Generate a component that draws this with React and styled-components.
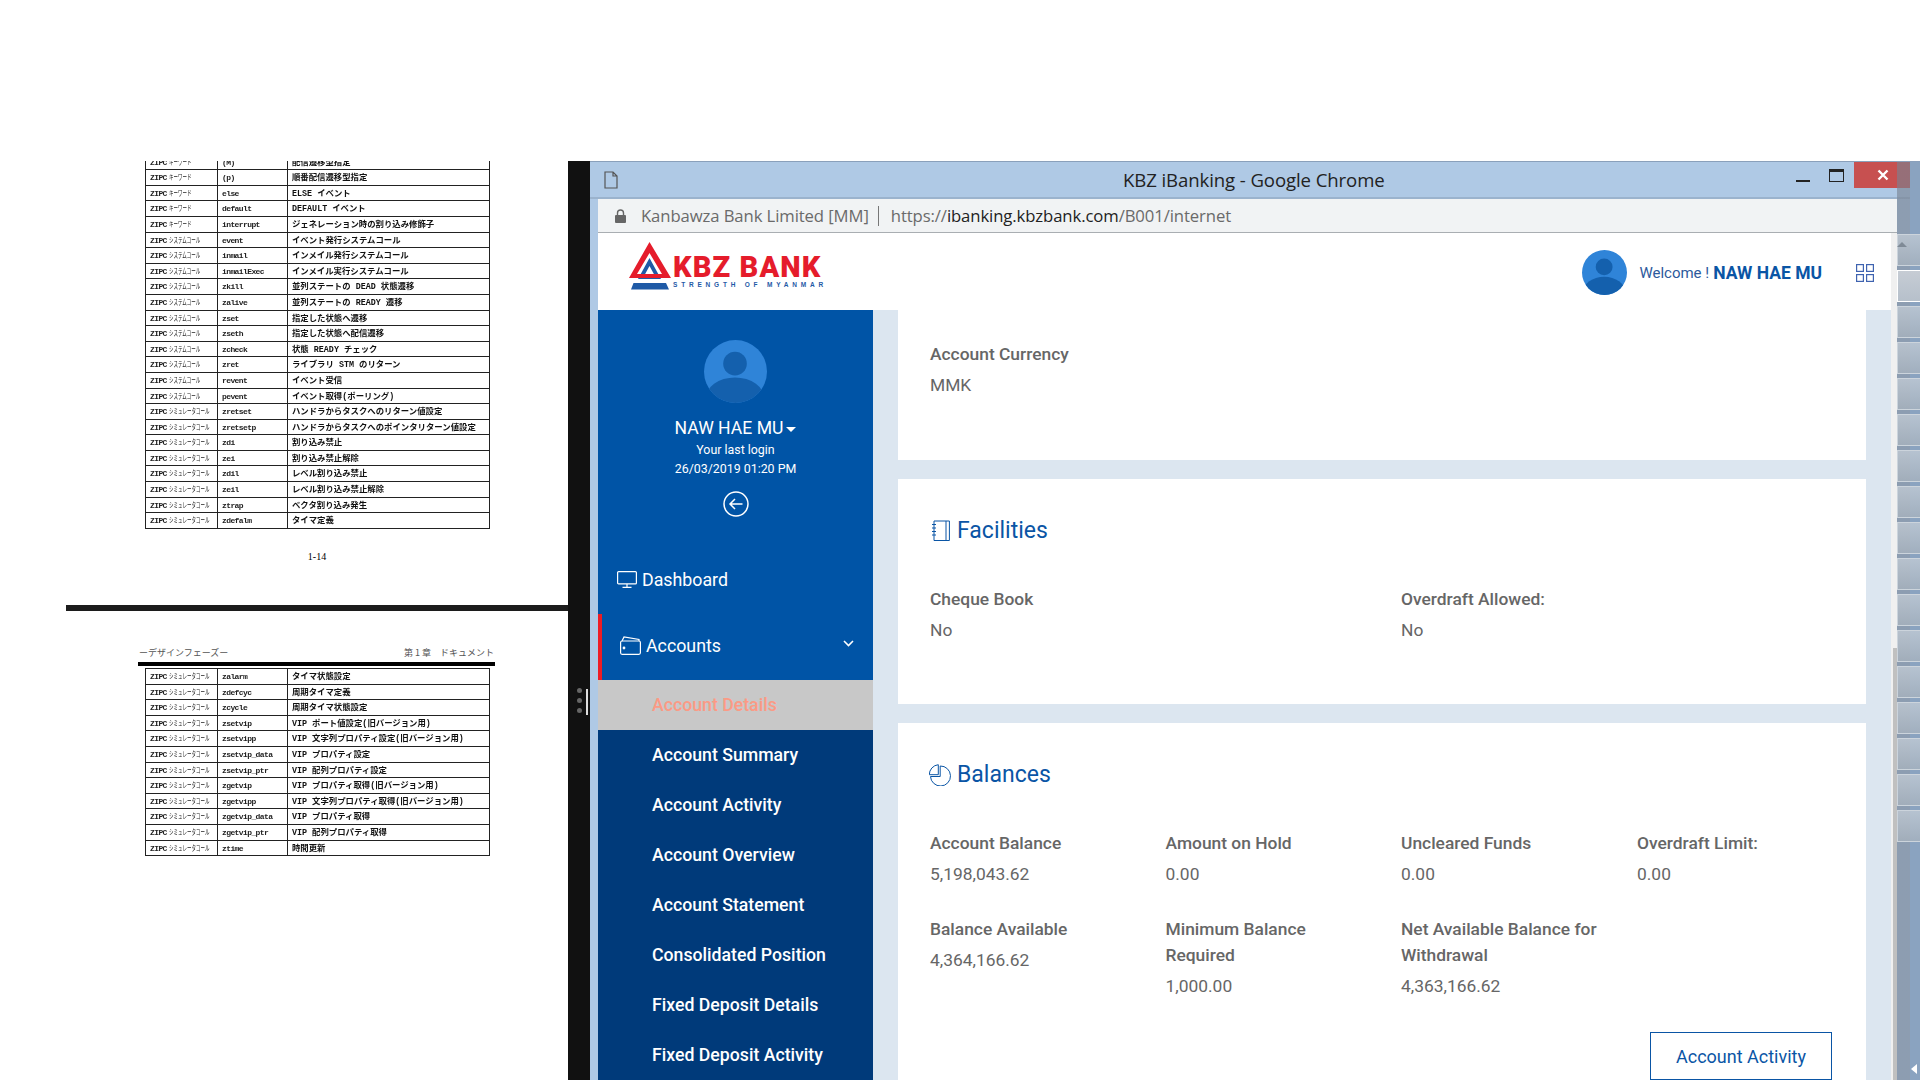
import React from 'react'
import styled, { createGlobalStyle } from 'styled-components'

const GlobalStyle = createGlobalStyle`
  html, body { margin: 0; padding: 0; background: #fff; }
  * { box-sizing: border-box; }
`

const KW = 'キーワード'
const SYS = 'システムコール'
const SIM = 'シミュレータコール'

const pageOne = [
  [KW, '(M)', '配信遷移型指定'],
  [KW, '(p)', '順番配信遷移型指定'],
  [KW, 'else', 'ELSE イベント'],
  [KW, 'default', 'DEFAULT イベント'],
  [KW, 'interrupt', 'ジェネレーション時の割り込み修飾子'],
  [SYS, 'event', 'イベント発行システムコール'],
  [SYS, 'inmail', 'インメイル発行システムコール'],
  [SYS, 'inmailExec', 'インメイル実行システムコール'],
  [SYS, 'zkill', '並列ステートの DEAD 状態遷移'],
  [SYS, 'zalive', '並列ステートの READY 遷移'],
  [SYS, 'zset', '指定した状態へ遷移'],
  [SYS, 'zseth', '指定した状態へ配信遷移'],
  [SYS, 'zcheck', '状態 READY チェック'],
  [SYS, 'zret', 'ライブラリ STM のリターン'],
  [SYS, 'revent', 'イベント受信'],
  [SYS, 'pevent', 'イベント取得(ポーリング)'],
  [SIM, 'zretset', 'ハンドラからタスクへのリターン値設定'],
  [SIM, 'zretsetp', 'ハンドラからタスクへのポインタリターン値設定'],
  [SIM, 'zdi', '割り込み禁止'],
  [SIM, 'zei', '割り込み禁止解除'],
  [SIM, 'zdil', 'レベル割り込み禁止'],
  [SIM, 'zeil', 'レベル割り込み禁止解除'],
  [SIM, 'ztrap', 'ベクタ割り込み発生'],
  [SIM, 'zdefalm', 'タイマ定義'],
]

const pageTwo = [
  [SIM, 'zalarm', 'タイマ状態設定'],
  [SIM, 'zdefcyc', '周期タイマ定義'],
  [SIM, 'zcycle', '周期タイマ状態設定'],
  [SIM, 'zsetvip', 'VIP ポート値設定(旧バージョン用)'],
  [SIM, 'zsetvipp', 'VIP 文字列プロパティ設定(旧バージョン用)'],
  [SIM, 'zsetvip_data', 'VIP プロパティ設定'],
  [SIM, 'zsetvip_ptr', 'VIP 配列プロパティ設定'],
  [SIM, 'zgetvip', 'VIP プロパティ取得(旧バージョン用)'],
  [SIM, 'zgetvipp', 'VIP 文字列プロパティ取得(旧バージョン用)'],
  [SIM, 'zgetvip_data', 'VIP プロパティ取得'],
  [SIM, 'zgetvip_ptr', 'VIP 配列プロパティ取得'],
  [SIM, 'ztime', '時間更新'],
]

const subMenu = [
  'Account Details',
  'Account Summary',
  'Account Activity',
  'Account Overview',
  'Account Statement',
  'Consolidated Position',
  'Fixed Deposit Details',
  'Fixed Deposit Activity',
]

const Screen = styled.div`
  width: 1920px;
  height: 1080px;
  overflow: hidden;
  background: #fff;
  display: flex;
  flex-direction: column;
  font-family: Roboto, "Liberation Sans", sans-serif;
`
const TopBand = styled.div`
  height: 161px;
  flex: none;
`
const Desktop = styled.div`
  flex: 1;
  min-height: 0;
  display: flex;
`

/* pdf viewer on the left */
const DocViewer = styled.div`
  width: 568px;
  flex: none;
  overflow: hidden;
  display: flex;
  flex-direction: column;
  align-items: flex-start;
`
const PageOne = styled.div`
  height: 444px;
  width: 100%;
  padding-left: 145px;
  overflow: hidden;
`
const ClippedTable = styled.div`
  margin-top: -7.4px;
`
const PageNumber = styled.div`
  width: 344px;
  margin-top: 22px;
  text-align: center;
  font: 10px "Liberation Serif", serif;
  color: #000;
`
const PageGap = styled.div`
  width: 100%;
  margin-left: 66px;
  height: 6px;
  flex: none;
  background: #1c1c1c;
`
const PageTwo = styled.div`
  padding: 36px 0 0 138px;
`
const DocHead = styled.div`
  width: 357px;
  display: flex;
  justify-content: space-between;
  padding: 0 1px;
  font: 9px "Noto Sans CJK JP", sans-serif;
  line-height: 12px;
  color: #555;
`
const DocRule = styled.div`
  width: 357px;
  height: 4px;
  margin: 3px 0 2px;
  background: #000;
`
const DocTable = styled.div`
  width: 345px;
  margin-left: ${p => p.$indent || 0}px;
  border: solid #222;
  border-width: 1px 1px 0 1px;
  filter: blur(0.3px);
`
const DocRow = styled.div`
  display: grid;
  grid-template-columns: 72px 70px 1fr;
  height: 15.6px;
  border-bottom: 1px solid #222;
`
const DocCell = styled.div`
  padding-left: 4px;
  border-right: ${p => (p.$last ? 0 : '1px solid #222')};
  font: 700 8px "Liberation Mono", "Noto Sans CJK JP", monospace;
  line-height: 16px;
  letter-spacing: -0.6px;
  color: #222;
  white-space: nowrap;
  overflow: hidden;
`
const TextCell = styled(DocCell)`
  font-size: 8.4px;
  letter-spacing: 0;
  color: #111;
`
const Kana = styled.span`
  display: inline-block;
  margin-left: 2px;
  font-size: 7.5px;
  font-weight: 400;
  letter-spacing: 0;
  transform: scaleX(0.6);
  transform-origin: left center;
`

const Splitter = styled.div`
  width: 22px;
  flex: none;
  background: #111;
  display: flex;
  flex-direction: column;
  justify-content: flex-start;
  align-items: flex-start;
  padding: 527px 0 0 9px;
  position: relative;
`
const Grip = styled.span`
  width: 5px;
  height: 5px;
  border-radius: 50%;
  background: #666;
  margin-bottom: 5px;
`
const GripBar = styled.span`
  position: absolute;
  left: 18px;
  top: 528px;
  width: 2px;
  height: 26px;
  background: #ddd;
`

/* chrome window */
const Window = styled.div`
  flex: 1;
  min-width: 0;
  position: relative;
  display: flex;
  flex-direction: column;
  background: #afc9e5;
  border-top: 1px solid #8aa0bb;
`
const TitleBar = styled.div`
  height: 37px;
  flex: none;
  display: flex;
  align-items: center;
  padding-left: 14px;
  position: relative;
  border-bottom: 2px solid #9bb3cd;
`
const WindowTitle = styled.div`
  position: absolute;
  left: 533px;
  top: 5px;
  font: 18.600px "Open Sans", sans-serif;
  line-height: 25px;
  letter-spacing: -0.1px;
  color: #222;
`
const Controls = styled.div`
  position: absolute;
  right: 8px;
  top: 0;
  display: flex;
  align-items: flex-start;
`
const MinButton = styled.span`
  width: 14px;
  height: 2px;
  margin-top: 18px;
  background: #222;
`
const MaxButton = styled.span`
  width: 15px;
  height: 13px;
  margin: 7px 10px 0 19px;
  border: 1px solid #222;
  border-top-width: 3px;
`
const CloseButton = styled.span`
  width: 58px;
  height: 26px;
  background: #c75050;
  display: flex;
  align-items: center;
  justify-content: center;
`
const WindowBody = styled.div`
  flex: 1;
  min-height: 0;
  padding: 0 23px 0 8px;
  display: flex;
  flex-direction: column;
`
const AddressBar = styled.div`
  height: 34px;
  flex: none;
  background: #f1f3f4;
  border-bottom: 1px solid #a9aeb2;
  display: flex;
  align-items: center;
  padding: 1px 0 0 17px;
  font: 16.700px "Open Sans", sans-serif;
  line-height: 32px;
  color: #6a6a6a;
  letter-spacing: -0.1px;
`
const SiteName = styled.span`
  margin-left: 15px;
`
const Divider = styled.span`
  width: 1px;
  height: 20px;
  margin: 0 12px 0 9px;
  background: #777;
`
const Host = styled.span`
  color: #222;
`
const PageArea = styled.div`
  flex: 1;
  min-height: 0;
  display: flex;
`
const PageColumn = styled.div`
  flex: 1;
  min-width: 0;
  display: flex;
  flex-direction: column;
`
const EdgeStrip = styled.div`
  width: 6px;
  flex: none;
  background: #f0f0f0;
  padding: 415px 0 0 2px;
`
const EdgeThumb = styled.div`
  height: 100%;
  background: #c0c0c0;
`
const Header = styled.header`
  height: 77px;
  flex: none;
  background: #fff;
  display: flex;
  align-items: center;
  padding: 0 17px 0 30px;
`
const Logo = styled.div`
  display: flex;
  align-items: flex-start;
  margin-top: -10px;
`
const LogoWords = styled.div`
  margin: 13px 0 0 1px;
`
const LogoName = styled.div`
  font: 900 29px Roboto, sans-serif;
  line-height: 24px;
  letter-spacing: 1.100px;
  color: #e51c2b;
  white-space: nowrap;
`
const LogoTag = styled.div`
  margin-top: 2px;
  font: 700 6.500px "Liberation Sans", sans-serif;
  line-height: 8px;
  letter-spacing: 3.800px;
  color: #1f5aa6;
  white-space: nowrap;
`
const UserBlock = styled.div`
  margin: 2px 0 0 auto;
  display: flex;
  align-items: center;
`
const WelcomeText = styled.span`
  margin-left: 12px;
  font-size: 15px;
  color: #2c5a9c;
  display: flex;
  align-items: center;
  gap: 4px;
`
const WelcomeName = styled.strong`
  font-size: 17.500px;
  font-weight: 700;
  color: #0a55a5;
`
const GridIcon = styled.svg`
  margin-left: 34px;
`
const Main = styled.div`
  flex: 1;
  min-height: 0;
  display: flex;
  background: #dce6f0;
`
const Sidebar = styled.aside`
  width: 275px;
  flex: none;
  background: #0054a6;
  padding-top: 30px;
  display: flex;
  flex-direction: column;
  align-items: center;
  color: #fff;
  overflow: hidden;
`
const ProfileName = styled.div`
  margin-top: 13px;
  font-size: 17.600px;
  line-height: 24px;
  display: flex;
  align-items: center;
  gap: 3px;
`
const Caret = styled.span`
  width: 0;
  height: 0;
  margin-top: 3px;
  border-left: 5px solid transparent;
  border-right: 5px solid transparent;
  border-top: 5px solid #fff;
`
const LoginLine = styled.div`
  font-size: 12.400px;
  line-height: 18px;
  padding-top: ${p => (p.$first ? 1 : 0)}px;
  margin-top: ${p => (p.$first ? 0 : 1)}px;
`
const BackButton = styled.div`
  margin-top: 13px;
  height: 26px;
`
const Nav = styled.nav`
  margin-top: 31px;
  width: 100%;
`
const NavItem = styled.div`
  height: 66px;
  display: flex;
  align-items: center;
  gap: 5px;
  font-size: 17.800px;
  padding: ${p => (p.$open ? '0 19px 4px 18px' : '0 19px 4px 19px')};
  border-left: ${p => (p.$open ? '4px solid #ed1c24' : '0')};
`
const Chevron = styled.svg`
  margin: 0 0 3px auto;
`
const SubMenu = styled.div`
  background: #003a7a;
`
const SubItem = styled.div`
  height: 50px;
  display: flex;
  align-items: center;
  padding-left: 54px;
  font-size: 17.700px;
  font-weight: 500;
  color: ${p => (p.$active ? '#fb9a85' : '#fff')};
  background: ${p => (p.$active ? '#c8c8c8' : 'transparent')};
`
const Content = styled.div`
  flex: 1;
  min-width: 0;
  padding: 0 25px;
  display: flex;
  flex-direction: column;
  gap: 19px;
  overflow: hidden;
`
const Card = styled.section`
  flex: none;
  background: #fff;
  height: ${p => (p.$h ? `${p.$h}px` : 'auto')};
  padding: ${p => p.$top}px 34px 0 32px;
`
const CardTitle = styled.h2`
  margin: 0 0 40px -1px;
  display: flex;
  align-items: center;
  gap: 6px;
  font-size: 23px;
  font-weight: 400;
  line-height: 30px;
  color: #0a55a5;
`
const FieldGrid = styled.div`
  display: grid;
  grid-template-columns: ${p => p.$cols};
  row-gap: 29px;
`
const Label = styled.div`
  font-size: 17.400px;
  font-weight: 500;
  line-height: 26px;
  color: #666;
`
const Value = styled.div`
  margin-top: 5px;
  font-size: 17.400px;
  line-height: 26px;
  color: #666;
`
const ActionRow = styled.div`
  margin-top: 33px;
  display: flex;
  justify-content: flex-end;
`
const OutlineButton = styled.button`
  width: 182px;
  height: 48px;
  background: #fff;
  border: 1px solid #0a55a5;
  font: 18px Roboto, sans-serif;
  color: #0a55a5;
`

/* translucent strip of the window behind, lying over the right edge */
const BackStrip = styled.div`
  position: absolute;
  top: 0;
  right: 0;
  bottom: 0;
  width: 23px;
  padding-top: 72px;
  display: flex;
  flex-direction: column;
  gap: 4px;
  background: linear-gradient(90deg, rgba(120, 130, 145, 0.62) 0 13px, #8aa3c0 13px);
`
const StripTile = styled.div`
  height: 32px;
  flex: none;
  border: 1px solid ${p => (p.$on ? '#fff' : '#ccd4dc')};
  border-right: 0;
  background: ${p => (p.$on
    ? 'linear-gradient(#c6ccd4, #b6c0cb)'
    : 'linear-gradient(rgba(200,208,216,.7), rgba(170,180,190,.7))')};
`
const UpArrow = styled.span`
  position: absolute;
  left: 0;
  top: 80px;
  border-left: 5px solid transparent;
  border-right: 5px solid transparent;
  border-bottom: 5px solid #7f8a96;
`
const LeftArrow = styled.span`
  position: absolute;
  right: 3px;
  bottom: 6px;
  border-top: 5px solid transparent;
  border-bottom: 5px solid transparent;
  border-right: 6px solid #fff;
`

function Avatar({ size }) {
  return (
    <svg width={size} height={size} viewBox="0 0 64 64" style={{ display: 'block', flex: 'none' }}>
      <defs>
        <clipPath id={`av${size}`}><circle cx="32" cy="32" r="32" /></clipPath>
      </defs>
      <circle cx="32" cy="32" r="32" fill="#2f84d8" />
      <g clipPath={`url(#av${size})`} fill="#1460ad">
        <circle cx="31.500" cy="24" r="12" />
        <ellipse cx="31.500" cy="60" rx="30" ry="22" />
      </g>
    </svg>
  )
}

function LogoMark() {
  return (
    <svg width="44" height="50" viewBox="0 0 44 50" style={{ display: 'block', flex: 'none' }}>
      <path d="M3 47.500 L5.500 41 H38 L41 47.500 Z M21.500 16 L33 37 H10 Z M21.500 24 L15.500 35 H27.500 Z" fill="#1f5aa6" fillRule="evenodd" />
      <path d="M21.500 0 L43 36 H1 Z M21.500 11 L9 32 H34 Z" fill="#e51c2b" fillRule="evenodd" />
    </svg>
  )
}

function PlainIcon({ w, h, children, box, sw = 1.2 }) {
  return (
    <svg width={w} height={h} viewBox={box} fill="none" stroke="currentColor" strokeWidth={sw} style={{ display: 'block', flex: 'none' }}>
      {children}
    </svg>
  )
}

function DocRows({ rows }) {
  return rows.map((r, i) => (
    <DocRow key={i}>
      <DocCell>ZIPC<Kana>{r[0]}</Kana></DocCell>
      <DocCell>{r[1]}</DocCell>
      <TextCell $last>{r[2]}</TextCell>
    </DocRow>
  ))
}

export default function App() {
  return (
    <Screen>
      <GlobalStyle />
      <TopBand />
      <Desktop>
        <DocViewer>
          <PageOne>
            <ClippedTable>
              <DocTable><DocRows rows={pageOne} /></DocTable>
            </ClippedTable>
            <PageNumber>1-14</PageNumber>
          </PageOne>
          <PageGap />
          <PageTwo>
            <DocHead><span>ーデザインフェーズー</span><span>第 1 章　ドキュメント</span></DocHead>
            <DocRule />
            <DocTable $indent={7}><DocRows rows={pageTwo} /></DocTable>
          </PageTwo>
        </DocViewer>
        <Splitter>
          <Grip /><Grip /><Grip />
          <GripBar />
        </Splitter>
        <Window>
          <TitleBar>
            <PlainIcon w={14} h={18} box="0 0 14 18">
              <path d="M1 1 H9 L13 5 V17 H1 Z M9 1 V5 H13" stroke="#555" />
            </PlainIcon>
            <WindowTitle>KBZ iBanking - Google Chrome</WindowTitle>
            <Controls>
              <MinButton />
              <MaxButton />
              <CloseButton>
                <svg width="12" height="12" viewBox="0 0 12 12"><path d="M1.500 1.500 L10.500 10.500 M10.500 1.500 L1.500 10.500" stroke="#fff" strokeWidth="2.400" /></svg>
              </CloseButton>
            </Controls>
          </TitleBar>
          <WindowBody>
            <AddressBar>
              <svg width="11" height="14" viewBox="0 0 11 14" style={{ flex: 'none' }}>
                <path d="M2.500 6 V4 a3 3 0 0 1 6 0 V6" fill="none" stroke="#666" strokeWidth="1.400" />
                <rect x="0" y="6" width="11" height="8" rx="1" fill="#666" />
              </svg>
              <SiteName>Kanbawza Bank Limited [MM]</SiteName>
              <Divider />
              <span>https://<Host>ibanking.kbzbank.com</Host>/B001/internet</span>
            </AddressBar>
            <PageArea>
              <PageColumn>
                <Header>
                  <Logo>
                    <LogoMark />
                    <LogoWords>
                      <LogoName>KBZ BANK</LogoName>
                      <LogoTag>STRENGTH OF MYANMAR</LogoTag>
                    </LogoWords>
                  </Logo>
                  <UserBlock>
                    <Avatar size={45} />
                    <WelcomeText>Welcome ! <WelcomeName>NAW HAE MU</WelcomeName></WelcomeText>
                    <GridIcon width="18" height="18" viewBox="0 0 18 18" fill="none" stroke="#3f63b0" strokeWidth="1.200">
                      <rect x="0.600" y="0.600" width="6.800" height="6.800" />
                      <rect x="10.600" y="0.600" width="6.800" height="6.800" />
                      <rect x="0.600" y="10.600" width="6.800" height="6.800" />
                      <rect x="10.600" y="10.600" width="6.800" height="6.800" />
                    </GridIcon>
                  </UserBlock>
                </Header>
                <Main>
                  <Sidebar>
                    <Avatar size={63} />
                    <ProfileName>NAW HAE MU<Caret /></ProfileName>
                    <LoginLine $first>Your last login</LoginLine>
                    <LoginLine>26/03/2019 01:20 PM</LoginLine>
                    <BackButton>
                      <svg width="26" height="26" viewBox="0 0 26 26" fill="none" stroke="#fff" strokeWidth="1.500" style={{ display: 'block' }}>
                        <circle cx="13" cy="13" r="12" />
                        <path d="M19.500 13 H7 M12 8 L7 13 L12 18" />
                      </svg>
                    </BackButton>
                    <Nav>
                      <NavItem>
                        <PlainIcon w={20} h={17} box="0 0 20 17">
                          <rect x="0.600" y="0.600" width="18.800" height="12.300" rx="1" />
                          <path d="M10 13 V16 M5.500 16.300 H14.500" />
                        </PlainIcon>
                        Dashboard
                      </NavItem>
                      <NavItem $open>
                        <PlainIcon w={21} h={19} box="0 0 21 19">
                          <rect x="0.600" y="5" width="19.800" height="13.300" rx="1.500" />
                          <path d="M2 5 L4 1 L19 3.500 V5" />
                          <circle cx="4" cy="12" r="0.800" fill="currentColor" />
                        </PlainIcon>
                        Accounts
                        <Chevron width="11" height="7" viewBox="0 0 11 7" fill="none" stroke="#fff" strokeWidth="1.600">
                          <path d="M1 1 L5.500 5.500 L10 1" />
                        </Chevron>
                      </NavItem>
                      <SubMenu>
                        {subMenu.map((s, i) => <SubItem key={s} $active={i === 0}>{s}</SubItem>)}
                      </SubMenu>
                    </Nav>
                  </Sidebar>
                  <Content>
                    <Card $h={150} $top={31}>
                      <Label>Account Currency</Label>
                      <Value>MMK</Value>
                    </Card>
                    <Card $h={225} $top={37}>
                      <CardTitle>
                        <PlainIcon w={22} h={22} box="0 0 22 22" sw={1}>
                          <path d="M5 1 H20.400 V20.500 H5 Z M17 1 V20.500 M3 4.500 H7 M3 8 H7 M3 11.500 H7 M3 15 H7" stroke="#0a55a5" />
                        </PlainIcon>
                        Facilities
                      </CardTitle>
                      <FieldGrid $cols="471px 1fr">
                        <div><Label>Cheque Book</Label><Value>No</Value></div>
                        <div><Label>Overdraft Allowed:</Label><Value>No</Value></div>
                      </FieldGrid>
                    </Card>
                    <Card $top={37}>
                      <CardTitle>
                        <PlainIcon w={22} h={22} box="0 0 22 22" sw={1}>
                          <path d="M11.200 2 A10 10 0 1 1 1.500 12.500 H11.200 Z M9.300 0.700 V10.700 H0.300 A10 10 0 0 1 9.300 0.700 Z" stroke="#0a55a5" />
                        </PlainIcon>
                        Balances
                      </CardTitle>
                      <FieldGrid $cols="235.500px 235.500px 236px 1fr">
                        <div><Label>Account Balance</Label><Value>5,198,043.62</Value></div>
                        <div><Label>Amount on Hold</Label><Value>0.00</Value></div>
                        <div><Label>Uncleared Funds</Label><Value>0.00</Value></div>
                        <div><Label>Overdraft Limit:</Label><Value>0.00</Value></div>
                        <div><Label>Balance Available</Label><Value>4,364,166.62</Value></div>
                        <div><Label>Minimum Balance<br />Required</Label><Value>1,000.00</Value></div>
                        <div><Label>Net Available Balance for<br />Withdrawal</Label><Value>4,363,166.62</Value></div>
                      </FieldGrid>
                      <ActionRow>
                        <OutlineButton>Account Activity</OutlineButton>
                      </ActionRow>
                    </Card>
                  </Content>
                </Main>
              </PageColumn>
              <EdgeStrip><EdgeThumb /></EdgeStrip>
            </PageArea>
          </WindowBody>
          <BackStrip>
            <UpArrow />
            {Array.from({ length: 17 }, (_, i) => <StripTile key={i} $on={i === 1} />)}
            <LeftArrow />
          </BackStrip>
        </Window>
      </Desktop>
    </Screen>
  )
}
